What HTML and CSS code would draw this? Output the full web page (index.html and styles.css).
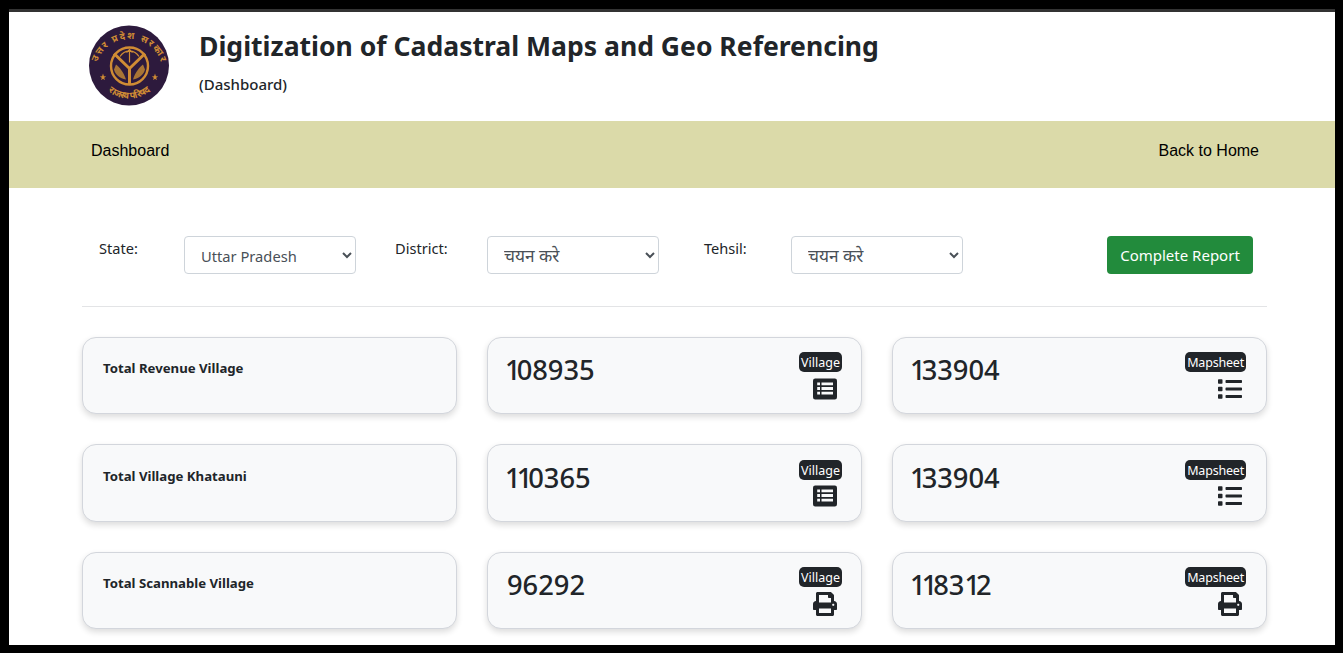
FILE: index.html
```html
<!DOCTYPE html>
<html lang="en">
<head>
<meta charset="utf-8">
<title>Dashboard</title>
<link rel="stylesheet" href="styles.css">
</head>
<body>
<svg class="defs" width="0" height="0" aria-hidden="true">
  <symbol id="i-listalt" viewBox="0 0 24 24"><path fill-rule="evenodd" d="M2.200 1.500H21.800A2.200 2.200 0 0 1 24 3.700V20.300A2.200 2.200 0 0 1 21.800 22.500H2.200A2.200 2.200 0 0 1 0 20.300V3.700A2.200 2.200 0 0 1 2.200 1.500ZM4.200 5.500V8.300H7V5.500ZM4.200 10.100V12.900H7V10.100ZM4.200 14.700V17.500H7V14.700ZM8.500 5.500V8.300H20V5.500ZM8.500 10.100V12.900H20V10.100ZM8.500 14.700V17.500H20V14.700Z"/></symbol>
  <symbol id="i-list" viewBox="0 0 512 512"><path d="M80 368H16a16 16 0 0 0-16 16v64a16 16 0 0 0 16 16h64a16 16 0 0 0 16-16v-64a16 16 0 0 0-16-16zm0-320H16A16 16 0 0 0 0 64v64a16 16 0 0 0 16 16h64a16 16 0 0 0 16-16V64a16 16 0 0 0-16-16zm0 160H16a16 16 0 0 0-16 16v64a16 16 0 0 0 16 16h64a16 16 0 0 0 16-16v-64a16 16 0 0 0-16-16zm416 176H176a16 16 0 0 0-16 16v32a16 16 0 0 0 16 16h320a16 16 0 0 0 16-16v-32a16 16 0 0 0-16-16zm0-320H176a16 16 0 0 0-16 16v32a16 16 0 0 0 16 16h320a16 16 0 0 0 16-16V80a16 16 0 0 0-16-16zm0 160H176a16 16 0 0 0-16 16v32a16 16 0 0 0 16 16h320a16 16 0 0 0 16-16v-32a16 16 0 0 0-16-16z"/></symbol>
  <symbol id="i-print" viewBox="0 0 512 512"><path d="M448 192V77.250c0-8.490-3.370-16.620-9.370-22.630L393.370 9.370c-6-6-14.140-9.370-22.630-9.370H96C78.330 0 64 14.330 64 32v160c-35.350 0-64 28.650-64 64v112c0 8.840 7.160 16 16 16h48v96c0 17.670 14.330 32 32 32h320c17.670 0 32-14.330 32-32v-96h48c8.840 0 16-7.160 16-16V256c0-35.350-28.650-64-64-64zm-64 256H128v-96h256v96zm0-224H128V64h192v48c0 8.840 7.160 16 16 16h48v96zm48 72c-13.250 0-24-10.750-24-24 0-13.260 10.750-24 24-24s24 10.740 24 24c0 13.250-10.750 24-24 24z"/></symbol>
</svg>
<div class="frame">
  <div class="page">
    <header class="header">
      <svg class="logo" viewBox="0 0 80 80" role="img" aria-label="Uttar Pradesh emblem">
        <defs>
          <path id="arc-top" d="M6.500 47A33.500 33.500 0 1 1 73.500 47"/>
          <path id="arc-bot" d="M11 56A33 33 0 0 0 69 56"/>
        </defs>
        <circle cx="40" cy="40" r="40" fill="#2d1a3d"/>
        <text class="logo-text"><textPath href="#arc-top" startOffset="50%" text-anchor="middle" textLength="84" lengthAdjust="spacing">उत्तर प्रदेश सरकार</textPath></text>
        <text class="logo-text"><textPath href="#arc-bot" startOffset="50%" text-anchor="middle" textLength="46" lengthAdjust="spacing">राजस्व परिषद</textPath></text>
        <circle cx="40.500" cy="40.500" r="18.500" fill="none" stroke="#d08c34" stroke-width="2.400"/>
        <path d="M25 28 40.500 43 56 28M40.500 43V59" fill="none" stroke="#d08c34" stroke-width="3"/>
        <path d="M31 31a11 11 0 0 1 19 0M40.500 24V37M37.500 27l3-3 3 3" fill="none" stroke="#d08c34" stroke-width="1.200"/>
        <path d="M27 39c3 2 8 8 10 15-6-1-11-5-12-10zM54 39c-3 2-8 8-10 15 6-1 11-5 12-10z" fill="#a87435"/>
        <path d="M14 48l.9 2.800 2.300.2-2 1.300.7 2.400-1.900-1.500-1.900 1.500.7-2.400-2-1.300 2.300-.2zM66 48l.9 2.800 2.300.2-2 1.300.7 2.400-1.900-1.500-1.900 1.500.7-2.400-2-1.300 2.300-.2z" fill="#d08c34"/>
      </svg>
      <div class="heading">
        <h1 class="title">Digitization of Cadastral Maps and Geo Referencing</h1>
        <p class="subtitle">(Dashboard)</p>
      </div>
    </header>
    <nav class="nav">
      <a class="nav-link">Dashboard</a>
      <a class="nav-link">Back to Home</a>
    </nav>
    <main class="main">
      <form class="filters">
        <label class="filter-label label-state">State:</label>
        <select class="filter-select select-latin"><option>Uttar Pradesh</option></select>
        <label class="filter-label label-district">District:</label>
        <select class="filter-select"><option>चयन करे</option></select>
        <label class="filter-label label-tehsil">Tehsil:</label>
        <select class="filter-select"><option>चयन करे</option></select>
        <button class="report-btn" type="button">Complete Report</button>
      </form>
      <hr class="rule">
      <section class="cards">
        <div class="card"><span class="card-name">Total Revenue Village</span></div>
        <div class="card"><span class="card-value"><span class="one lead">1</span>08935</span><div class="card-side"><span class="badge">Village</span><svg class="icon"><use href="#i-listalt"/></svg></div></div>
        <div class="card"><span class="card-value"><span class="one lead">1</span>33904</span><div class="card-side"><span class="badge badge-wide">Mapsheet</span><svg class="icon"><use href="#i-list"/></svg></div></div>
        <div class="card"><span class="card-name">Total Village Khatauni</span></div>
        <div class="card"><span class="card-value"><span class="one lead">1</span><span class="one">1</span>0365</span><div class="card-side"><span class="badge">Village</span><svg class="icon"><use href="#i-listalt"/></svg></div></div>
        <div class="card"><span class="card-value"><span class="one lead">1</span>33904</span><div class="card-side"><span class="badge badge-wide">Mapsheet</span><svg class="icon"><use href="#i-list"/></svg></div></div>
        <div class="card"><span class="card-name">Total Scannable Village</span></div>
        <div class="card"><span class="card-value">96292</span><div class="card-side"><span class="badge">Village</span><svg class="icon"><use href="#i-print"/></svg></div></div>
        <div class="card"><span class="card-value"><span class="one lead">1</span><span class="one">1</span>83<span class="one">1</span>2</span><div class="card-side"><span class="badge badge-wide">Mapsheet</span><svg class="icon"><use href="#i-print"/></svg></div></div>
      </section>
    </main>
  </div>
</div>
</body>
</html>
```
FILE: styles.css
```css
* { box-sizing: border-box; }
html, body { margin: 0; height: 100%; overflow: hidden; background: #000; }
body { font-family: "Noto Sans", "Open Sans", sans-serif; color: #212529; }
.defs { position: absolute; }
.frame { height: 653px; padding: 9px 8px 8px 9px; }
.page { height: 636px; background: #fff; border-top: 3px solid #333; overflow: hidden; }

.header { height: 109px; display: flex; padding: 13px 0 0 80px; }
.logo { width: 80px; height: 81px; flex: none; }
.logo-text { font: 700 9.500px "Noto Sans", "Noto Sans CJK SC", sans-serif; fill: #d08c34; }
.heading { margin-left: 30px; }
.title { margin: 3px 0 0; font-size: 26.560px; line-height: 36px; font-weight: 700; white-space: nowrap; }
.subtitle { margin: 10px 0 0; font-size: 15px; line-height: 20px; font-weight: 500; }

.nav { height: 67px; background: #dbdaa9; display: flex; justify-content: space-between; align-items: center; padding: 0 76px 7px 82px; font-family: "Liberation Sans", Arial, sans-serif; font-size: 16px; color: #000; }
.nav-link { color: #000; }

.main { padding: 48px 68px 0 73px; }
.filters { display: flex; align-items: flex-start; padding-left: 17px; }
.filter-label { font-size: 14.600px; line-height: 24px; }
.label-state { width: 85px; }
.label-district { width: 92px; margin-left: 39px; }
.label-tehsil { width: 87px; margin-left: 45px; }
.filter-select { width: 172px; height: 38px; background: #fff; border: 1px solid #ced4da; border-radius: 4px; padding: 0 12px; font: 400 17.300px "Noto Sans", sans-serif; color: #495057; }
.select-latin { font-size: 14.700px; padding-top: 2px; }
.report-btn { margin-left: auto; margin-right: 14px; width: 146px; height: 38px; background: #228b3c; color: #fff; border: 0; border-radius: 4px; font: 400 15px "Noto Sans", sans-serif; padding: 0; }

.rule { margin: 32px 0 30px; border: 0; border-top: 1px solid #e3e4e6; }

.cards { display: grid; grid-template-columns: repeat(3, 375px); grid-template-rows: 77px 78px 77px; column-gap: 30px; row-gap: 30px; }
.card { background: #f8f9fa; border: 1px solid #d3d6dc; border-radius: 14px; box-shadow: 0 3px 6px rgba(0,0,0,.14); display: flex; justify-content: space-between; align-items: flex-start; padding: 14px 19px 0 19px; }
.card:nth-child(n+4):nth-child(-n+6) { padding-top: 15px; }
.card:nth-child(n+4):nth-child(-n+6) .icon { margin-top: 4px; }
.card-name { font-size: 13.200px; font-weight: 700; line-height: 18px; margin: 7px 0 0 1px; }
.card-value { font-size: 27.300px; font-weight: 500; line-height: 36px; }
.one { letter-spacing: -4px; }
.lead { margin-left: -2px; }
.card-side { display: flex; flex-direction: column; align-items: flex-end; }
.badge { background: #212529; color: #fff; border-radius: 5px; font-size: 12.500px; line-height: 20px; padding: 1px 2px 0; height: 20px; }
.badge-wide { letter-spacing: -.2px; margin-right: 1px; }
.icon { width: 24px; height: 24px; margin: 5px 5px 0 0; fill: #212529; display: block; }
```
